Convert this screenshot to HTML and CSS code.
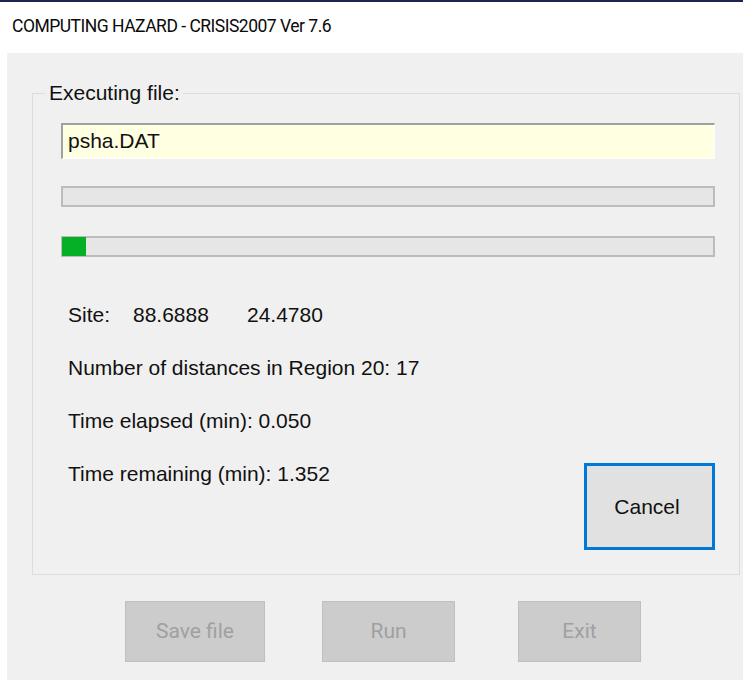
FILE: index.html
```html
<!DOCTYPE html>
<html lang="en">
<head>
<meta charset="utf-8">
<title>COMPUTING HAZARD - CRISIS2007 Ver 7.6</title>
<link rel="stylesheet" href="styles.css">
</head>
<body>
<div class="window">
  <div class="frame-edge"></div>
  <header class="titlebar">COMPUTING HAZARD - CRISIS2007 Ver 7.6</header>
  <main class="dialog">
    <fieldset class="group">
      <legend class="group-label">Executing file:</legend>
      <div class="file-field">psha.DAT</div>
      <div class="progress"></div>
      <div class="progress"><div class="progress-fill" style="width:24px"></div></div>
      <div class="status">
        <div class="info">
          <p class="info-line"><span class="site-label">Site:</span><span class="site-x">88.6888</span><span>24.4780</span></p>
          <p class="info-line">Number of distances in Region 20: 17</p>
          <p class="info-line">Time elapsed (min): 0.050</p>
          <p class="info-line">Time remaining (min): 1.352</p>
        </div>
        <button class="btn-cancel" type="button">Cancel</button>
      </div>
    </fieldset>
    <div class="actions">
      <button class="btn-action btn-save" type="button" disabled>Save file</button>
      <button class="btn-action btn-run" type="button" disabled>Run</button>
      <button class="btn-action btn-exit" type="button" disabled>Exit</button>
    </div>
  </main>
</div>
</body>
</html>
```

FILE: styles.css
```css
* {
  box-sizing: border-box;
}

html, body {
  margin: 0;
  padding: 0;
  background: #ffffff;
}

body {
  width: 743px;
  height: 680px;
  overflow: hidden;
  font-family: "Liberation Sans", Arial, sans-serif;
  color: #000000;
}

.window {
  display: flex;
  flex-direction: column;
  height: 680px;
}

.frame-edge {
  height: 2px;
  background: #1c2452;
}

.titlebar {
  height: 51px;
  padding: 12px 0 0 12px;
  font-family: Roboto, "Noto Sans", sans-serif;
  font-size: 17.5px;
  line-height: 24px;
  color: #0a0a0a;
  letter-spacing: -0.5px;
  background: #ffffff;
}

.dialog {
  flex: 1;
  margin-left: 7px;
  background: #f0f0f0;
  padding: 30px 3px 0 25px;
}

/* group box with the running job */
.group {
  margin: 0;
  height: 492px;
  border: 1px solid #dcdcdc;
  padding: 0 24px 0 28px;
  display: flex;
  flex-direction: column;
}

.group-label {
  margin-left: -16px;
  padding: 0 3px 0 4px;
  font-size: 21px;
  color: #111111;
  line-height: 20px;
}

.file-field {
  margin-top: 20px;
  height: 36px;
  background: #ffffe1;
  border-top: 2px solid #a0a0a0;
  border-left: 2px solid #a0a0a0;
  border-right: 1px solid #ffffff;
  border-bottom: 1px solid #ffffff;
  padding: 3px 0 0 5px;
  font-size: 21px;
  line-height: 26px;
  color: #111111;
}

.progress {
  margin-top: 27px;
  height: 21px;
  background: #e6e6e6;
  border: 2px solid #bcbcbc;
  padding: 0;
}

.progress + .progress {
  margin-top: 29px;
}

.progress-fill {
  background: #06b025;
  margin: -1px 0 0 -1px;
  height: 19px;
}

.status {
  flex: 1;
  display: flex;
  justify-content: space-between;
  align-items: flex-end;
  padding-bottom: 24px;
}

.info {
  align-self: flex-start;
  padding: 46px 0 0 7px;
}

.info-line {
  margin: 0;
  height: 53px;
  font-size: 21px;
  line-height: 24px;
  color: #111111;
}

.site-label {
  display: inline-block;
  width: 65px;
}

.site-x {
  display: inline-block;
  width: 114px;
}

.btn-cancel {
  width: 131px;
  height: 87px;
  margin: 0;
  border: 3px solid #0078d7;
  background: #e1e1e1;
  font-family: "Liberation Sans", Arial, sans-serif;
  font-size: 21px;
  color: #111111;
  padding: 0 5px 0 0;
}

.actions {
  display: flex;
  gap: 57px;
  padding: 26px 0 0 93px;
}

.btn-action {
  height: 61px;
  margin: 0;
  padding: 0 0 2px;
  background: #cccccc;
  border: 1px solid #bfbfbf;
  font-family: Roboto, "Noto Sans", sans-serif;
  font-size: 21px;
  color: #a0a0a0;
}

.btn-save {
  width: 140px;
}

.btn-run {
  width: 133px;
}

.btn-exit {
  width: 123px;
  margin-left: 6px;
}
```
